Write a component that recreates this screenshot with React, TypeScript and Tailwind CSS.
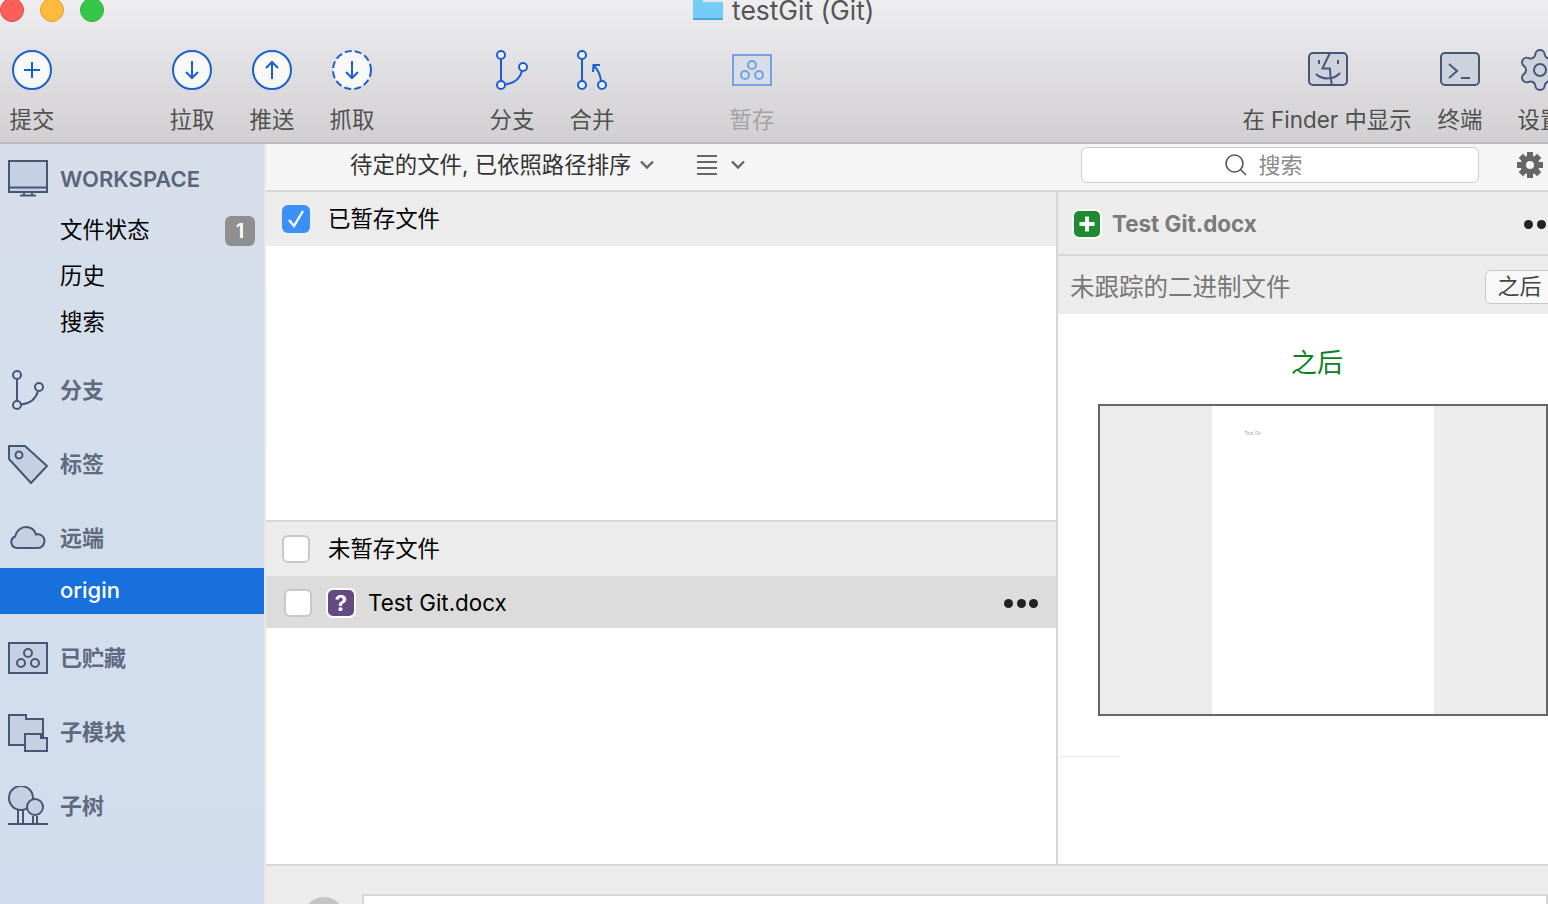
import { Settings } from "lucide-react";
import type { ReactNode } from "react";

const BLUE = "#1a5fd0";
const SLATE = "#445875";
const FILL = "#c5d1e3";

const RoundIcon = ({ dashed, children }: { dashed?: boolean; children: ReactNode }) => (
  <svg width="40" height="40" viewBox="0 0 40 40" fill="none" stroke={BLUE} strokeWidth="2">
    <circle cx="20" cy="20" r="19" fill="#f8f8f9" strokeDasharray={dashed ? "7 3.2" : undefined} />
    {children}
  </svg>
);

const ToolbarButton = ({ label, muted, children }: { label: string; muted?: boolean; children: ReactNode }) => (
  <div className="w-20 shrink-0 flex flex-col items-center">
    <div className="h-10 flex items-center justify-center">{children}</div>
    <span className={`mt-[18px] text-[22.4px] leading-6 whitespace-nowrap ${muted ? "text-[#a3a3a3]" : "text-[#505050]"}`}>
      {label}
    </span>
  </div>
);

const SectionRow = ({ label, children }: { label: string; children: ReactNode }) => (
  <div className="h-[60px] mb-[14px] flex items-center">
    <div className="w-10 ml-2 h-10 shrink-0">{children}</div>
    <span className="ml-3 text-[22px] font-semibold text-[#5f6a7e]">{label}</span>
  </div>
);

const SidebarItem = ({ label, badge }: { label: string; badge?: string }) => (
  <div className="h-[46px] pl-[60px] pr-[9px] flex items-center justify-between text-[22.4px] text-black">
    <span>{label}</span>
    {badge && (
      <span className="mt-[2px] w-[30px] h-[30px] rounded-md bg-[#8f8f8f] text-white text-[20px] font-semibold flex items-center justify-center">
        {badge}
      </span>
    )}
  </div>
);

const Checkbox = ({ checked }: { checked?: boolean }) => (
  <div
    className={`w-7 h-7 shrink-0 rounded-md flex items-center justify-center ${
      checked ? "bg-[#3b8ff5]" : "bg-white border-2 border-[#c8c8c8]"
    }`}
  >
    {checked && (
      <svg width="20" height="20" viewBox="0 0 20 20" fill="none" stroke="#fff" strokeWidth="2.4">
        <path d="M3 11l5 6L17 2" />
      </svg>
    )}
  </div>
);

const Dots = () => (
  <div className="flex gap-[3.5px]">
    <span className="w-[9px] h-[9px] rounded-full bg-[#222]" />
    <span className="w-[9px] h-[9px] rounded-full bg-[#222]" />
    <span className="w-[9px] h-[9px] rounded-full bg-[#222]" />
  </div>
);

const Chevron = () => (
  <svg width="14" height="10" viewBox="0 0 14 10" fill="none" stroke="#666" strokeWidth="2.4">
    <path d="M1 1.5l6 6 6-6" />
  </svg>
);

const App = () => {
  return (
    <div className="w-[1548px] h-[904px] overflow-hidden flex flex-col bg-white [font-family:Inter,'Noto_Sans_CJK_SC',sans-serif]">
      {/* title bar + toolbar */}
      <div className="h-[144px] shrink-0 overflow-hidden border-b-2 border-[#bdbcbe] bg-gradient-to-b from-[#eeedf0] to-[#d1cfd2]">
        <div className="h-6 -mt-[2px] flex items-center">
          <span className="w-6 h-6 rounded-full bg-[#fc5f58] border border-[#e0483f]" />
          <span className="w-6 h-6 ml-4 rounded-full bg-[#fdbc3d] border border-[#e0a030]" />
          <span className="w-6 h-6 ml-4 rounded-full bg-[#34c849] border border-[#2aac3c]" />
          <svg className="ml-[589px]" width="30" height="24" viewBox="0 0 30 24">
            <path d="M0 0h30v20.5a1.5 1.5 0 0 1-1.5 1.5h-27A1.5 1.5 0 0 1 0 20.5z" fill="#76ccf8" />
            <path d="M10 0h20v4H10z" fill="#e6e6e8" />
            <path d="M0 20h30v.5a1.5 1.5 0 0 1-1.5 1.5h-27A1.5 1.5 0 0 1 0 20.5z" fill="#4aa6dc" />
          </svg>
          <span className="ml-[9px] text-[26.4px] leading-6 text-[#555] whitespace-nowrap">testGit (Git)</span>
        </div>

        <div className="mt-[28px] -ml-2 flex">
          <ToolbarButton label="提交">
            <RoundIcon>
              <path d="M20 12v16M12 20h16" />
            </RoundIcon>
          </ToolbarButton>
          <div className="w-20 shrink-0" />
          <ToolbarButton label="拉取">
            <RoundIcon>
              <path d="M20 11v17M14 22l6 6 6-6" />
            </RoundIcon>
          </ToolbarButton>
          <ToolbarButton label="推送">
            <RoundIcon>
              <path d="M20 29V12M14 18l6-6 6 6" />
            </RoundIcon>
          </ToolbarButton>
          <ToolbarButton label="抓取">
            <RoundIcon dashed>
              <path d="M20 11v17M14 22l6 6 6-6" />
            </RoundIcon>
          </ToolbarButton>
          <div className="w-20 shrink-0" />
          <ToolbarButton label="分支">
            <svg width="40" height="40" viewBox="0 0 40 40" fill="none" stroke={BLUE} strokeWidth="2">
              <circle cx="9" cy="5" r="4" fill="#f3f3f5" />
              <circle cx="9" cy="35" r="4" fill="#f3f3f5" />
              <circle cx="31" cy="17" r="4" fill="#f3f3f5" />
              <path d="M9 9v22M13 34.5c10-1 15-6 17-13.5" />
            </svg>
          </ToolbarButton>
          <ToolbarButton label="合并">
            <svg width="40" height="40" viewBox="0 0 40 40" fill="none" stroke={BLUE} strokeWidth="2">
              <circle cx="10" cy="5" r="4" fill="#f3f3f5" />
              <circle cx="10" cy="35" r="4" fill="#f3f3f5" />
              <circle cx="30" cy="35" r="4" fill="#f3f3f5" />
              <path d="M10 9v22M29 31c-.5-6-3-11-7-15M21 22l.5-7 6.5 0" />
            </svg>
          </ToolbarButton>
          <div className="w-20 shrink-0" />
          <ToolbarButton label="暂存" muted>
            <svg width="40" height="40" viewBox="0 0 40 40" fill="none" stroke="#72a3de" strokeWidth="2">
              <rect x="1" y="5" width="38" height="30" fill="#d8dde8" />
              <circle cx="20" cy="15" r="4" />
              <circle cx="13" cy="25" r="4" />
              <circle cx="27" cy="25" r="4" />
            </svg>
          </ToolbarButton>
          <div className="w-[447px] shrink-0" />
          <div className="w-[176px] mr-[5px] shrink-0 flex flex-col items-center">
            <div className="h-10 flex items-center justify-center">
              <svg className="ml-[2px]" width="40" height="40" viewBox="0 0 40 40" fill="none" stroke={SLATE} strokeWidth="2">
                <rect x="1" y="3" width="38" height="32" rx="4" fill="#ced2dc" />
                <path d="M22 3c-3 6-5.500 11-7.500 15.500H22c0 6 .5 11 2 16.500" />
                <path d="M8 24c6 6 18 6 24-1" />
                <path d="M11 10v4M30 10v4" />
              </svg>
            </div>
            <span className="mt-[18px] text-[22.4px] leading-6 text-[#505050] whitespace-nowrap">在 Finder 中显示</span>
          </div>
          <ToolbarButton label="终端">
            <svg width="40" height="40" viewBox="0 0 40 40" fill="none" stroke={SLATE} strokeWidth="2">
              <rect x="1" y="3" width="38" height="32" rx="4" fill="#ced2dc" />
              <path d="M9 14l8 7-8 7M21 28h9" />
            </svg>
          </ToolbarButton>
          <ToolbarButton label="设置">
            <Settings size={48} strokeWidth={1} color={SLATE} fill="#ced2dc" />
          </ToolbarButton>
        </div>
      </div>

      <div className="flex-1 min-h-0 flex">
        {/* sidebar */}
        <aside className="w-[266px] shrink-0 border-r-2 border-[#e8e8e8] pt-[7px] bg-gradient-to-b from-[#d7deea] via-[#d3deed] to-[#d1dcee]">
          <div className="h-[56px] flex items-center">
            <svg className="ml-2 shrink-0" width="40" height="40" viewBox="0 0 40 40" fill="none" stroke={SLATE} strokeWidth="2">
              <rect x="1" y="2" width="38" height="31" fill={FILL} />
              <path d="M1 28.500h38M16 33v3M24 33v3M12 36.500h16" />
            </svg>
            <span className="ml-3 text-[22px] font-semibold text-[#5a6579]">WORKSPACE</span>
          </div>
          <SidebarItem label="文件状态" badge="1" />
          <SidebarItem label="历史" />
          <SidebarItem label="搜索" />
          <div className="h-[15px]" />
          <SectionRow label="分支">
            <svg width="40" height="40" viewBox="0 0 40 40" fill="none" stroke={SLATE} strokeWidth="2">
              <circle cx="9" cy="5" r="4" />
              <circle cx="9" cy="35" r="4" />
              <circle cx="31" cy="17" r="4" />
              <path d="M9 9v22M13 34.500c10-1 15-6 17-13.500" />
            </svg>
          </SectionRow>
          <SectionRow label="标签">
            <svg width="40" height="40" viewBox="0 0 40 40" fill={FILL} stroke={SLATE} strokeWidth="2">
              <path d="M1 2h16l22 20-16 17L1 15z" strokeLinejoin="round" />
              <circle cx="11" cy="11" r="3.500" fill="none" />
            </svg>
          </SectionRow>
          <SectionRow label="远端">
            <svg width="40" height="40" viewBox="0 0 40 40" fill={FILL} stroke={SLATE} strokeWidth="2">
              <path d="M9 30a6 6 0 0 1-2-11.500C8 13 13 9 18 9c5 0 8.500 3 10 7.500 4-1 8.500 1.500 8.500 6.500 0 4-3 7-6.500 7z" />
            </svg>
          </SectionRow>
          <div className="h-[46px] -mt-[14px] mb-[14px] w-[264px] pl-[60px] pb-[2px] flex items-center bg-[#1870dc] text-white text-[22px] font-medium">
            origin
          </div>
          <SectionRow label="已贮藏">
            <svg width="40" height="40" viewBox="0 0 40 40" fill="none" stroke={SLATE} strokeWidth="2">
              <rect x="1" y="5" width="38" height="30" fill={FILL} />
              <circle cx="20" cy="15" r="4" />
              <circle cx="13" cy="25" r="4" />
              <circle cx="27" cy="25" r="4" />
            </svg>
          </SectionRow>
          <SectionRow label="子模块">
            <svg width="40" height="40" viewBox="0 0 40 40" fill={FILL} stroke={SLATE} strokeWidth="2">
              <path d="M1 3h17v4h17v26H1z" />
              <path d="M17 22h16v4h6v13H17z" />
            </svg>
          </SectionRow>
          <SectionRow label="子树">
            <svg width="40" height="40" viewBox="0 0 40 40" fill={FILL} stroke={SLATE} strokeWidth="2">
              <path d="M10 24v14M15 24v14M25 30v8M29 30v8" fill="none" />
              <circle cx="13" cy="12" r="12" />
              <circle cx="27" cy="21" r="8" />
              <path d="M0 38h40" fill="none" />
            </svg>
          </SectionRow>
        </aside>

        {/* main */}
        <main className="flex-1 min-w-0 flex flex-col">
          <div className="h-[48px] shrink-0 pb-1 flex items-center bg-[#f5f5f5] border-b-2 border-[#d8d8d8]">
            <span className="ml-[84px] text-[22.4px] text-[#333] whitespace-nowrap">待定的文件, 已依照路径排序</span>
            <div className="ml-[9px]">
              <Chevron />
            </div>
            <svg className="ml-[43px]" width="20" height="22" viewBox="0 0 20 22" stroke="#666" strokeWidth="2">
              <path d="M0 2h20M0 8h20M0 14h20M0 20h20" />
            </svg>
            <div className="ml-[14px]">
              <Chevron />
            </div>
            <div className="ml-[336px] w-[398px] h-[36px] shrink-0 rounded-md bg-white border border-[#cccccc] flex items-center justify-center pr-[34px]">
              <svg width="24" height="24" viewBox="0 0 24 24" fill="none" stroke="#555" strokeWidth="1.600">
                <circle cx="10.500" cy="10.500" r="8.500" />
                <path d="M16.500 16.500L22 22" />
              </svg>
              <span className="ml-[10px] text-[22px] text-[#8a8a8a]">搜索</span>
            </div>
            <svg className="ml-[37px] shrink-0" width="28" height="28" viewBox="0 0 28 28" fill="none">
              <path d="M14 1v26M1 14h26M4.800 4.800l18.400 18.400M23.200 4.800L4.800 23.200" stroke="#666" strokeWidth="6" />
              <circle cx="14" cy="14" r="9.500" fill="#666" />
              <circle cx="14" cy="14" r="4" fill="#f5f5f5" />
            </svg>
          </div>

          <div className="flex-1 min-h-0 flex">
            <div className="w-[790px] shrink-0 flex flex-col">
              <div className="h-[54px] shrink-0 pl-4 flex items-center bg-[#ececec] text-[22.4px] text-black">
                <Checkbox checked />
                <span className="ml-[18px]">已暂存文件</span>
              </div>
              <div className="h-[276px] shrink-0 bg-white border-b-2 border-[#d6d6d6]" />
              <div className="h-[54px] shrink-0 pl-4 flex items-center bg-[#ececec] text-[22.4px] text-black">
                <Checkbox />
                <span className="ml-[18px]">未暂存文件</span>
              </div>
              <div className="h-[52px] shrink-0 pl-[18px] pr-[18px] pt-[2px] flex items-center bg-[#dcdcdc] text-[22.4px] text-black">
                <Checkbox />
                <span className="ml-[14px] w-[30px] h-[30px] shrink-0 rounded-[7px] bg-[#634a82] border-2 border-white text-white text-[22px] font-bold flex items-center justify-center">
                  ?
                </span>
                <span className="ml-[12px]">Test Git.docx</span>
                <div className="ml-auto">
                  <Dots />
                </div>
              </div>
              <div className="flex-1 bg-white" />
            </div>

            {/* diff pane */}
            <div className="flex-1 min-w-0 overflow-hidden border-l-2 border-[#d6d6d6]">
              <div className="w-[510px]">
                <div className="h-[64px] pl-[14px] pr-[10px] pt-[2px] flex items-center bg-[#ececec] border-b-2 border-[#d6d6d6]">
                  <span className="w-[30px] h-[30px] shrink-0 rounded-[7px] bg-[#1e8a32] border-2 border-white flex items-center justify-center">
                    <svg width="18" height="18" viewBox="0 0 18 18" fill="#fff">
                      <path d="M7 1.500h4V7h5.500v4H11v5.500H7V11H1.500V7H7z" />
                    </svg>
                  </span>
                  <span className="ml-[10px] text-[22.4px] font-bold text-[#7a7a7a]">Test Git.docx</span>
                  <div className="ml-auto">
                    <Dots />
                  </div>
                </div>
                <div className="h-[58px] pl-3 pt-[3px] flex items-center bg-[#ececec]">
                  <span className="mt-[2px] text-[24.5px] text-[#777]">未跟踪的二进制文件</span>
                  <span className="ml-[194px] w-[70px] h-[34px] rounded-md border border-[#c8c8c8] bg-[#f8f8f8] text-[22px] text-[#444] flex items-center pl-3 shrink-0">
                    之后
                  </span>
                </div>
                <div className="mt-[29px] w-[518px] text-center text-[26px] leading-[40px] text-[#0a7f24]">之后</div>
                <div className="mt-[21px] ml-10 w-[450px] h-[312px] border-2 border-[#666] bg-[#ececec] flex justify-center">
                  <div className="-ml-px w-[222px] h-full bg-white pl-[33px] pt-[25px]">
                    <span className="block text-[4.5px] leading-[5px] text-[#999]">Test Git</span>
                  </div>
                </div>
                <div className="mt-10 ml-[2px] w-[60px] h-px bg-[#e8e8e8]" />
              </div>
            </div>
          </div>

          {/* commit area */}
          <div className="h-[40px] shrink-0 border-t-2 border-[#d6d6d6] bg-[#ececec] flex items-start">
            <div className="mt-[31px] ml-[38px] w-10 h-10 shrink-0 rounded-full bg-[#c4c4c4]" />
            <div className="mt-7 ml-[18px] flex-1 h-10 bg-white border-2 border-[#d6d6d6]" />
          </div>
        </main>
      </div>
    </div>
  );
};

export default App;
